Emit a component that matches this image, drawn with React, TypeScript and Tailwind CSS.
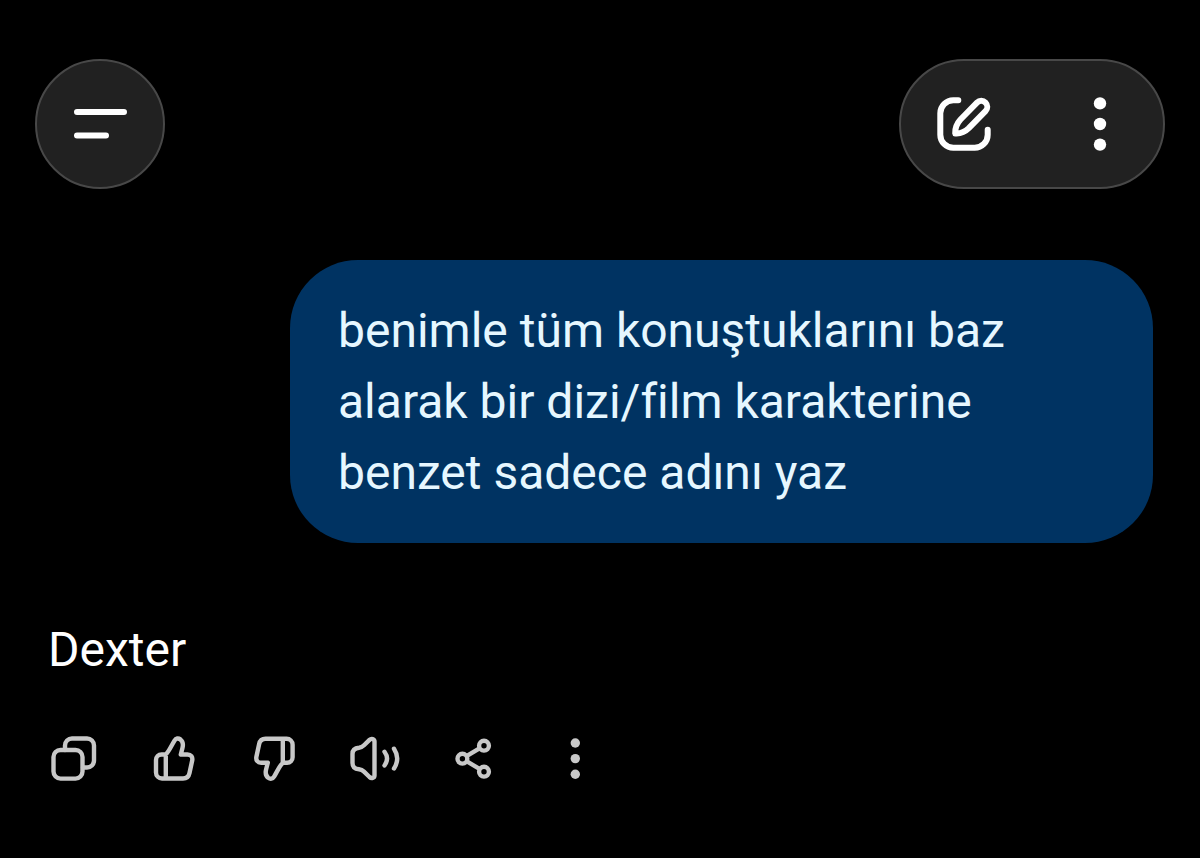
import type { ReactNode } from 'react'

const messages = {
  user: 'benimle tüm konuştuklarını baz alarak bir dizi/film karakterine benzet sadece adını yaz',
  assistant: 'Dexter'
}

const thumbPath =
  'M13.5 21.5H17.6C20.5 19.5 23.2 13 26.5 7.6C28 5.2 30.3 4.9 32.4 6.4C35 8.4 35.3 11.8 34.4 15.2L32.8 21.5H39.5C43 21.5 44.9 24 44.2 27.5L41.5 40C40.8 43.5 38.5 45.5 35 45.5H14A6 6 0 0 1 8 39.5V27A5.5 5.5 0 0 1 13.5 21.5ZM17.8 21.5V45.5'

function HeaderIcon({ children }: { children: ReactNode }) {
  return (
    <svg
      viewBox="0 0 54 54"
      className="size-[54px]"
      fill="none"
      stroke="currentColor"
      strokeWidth="6"
      strokeLinecap="round"
      strokeLinejoin="round"
      aria-hidden="true"
    >
      {children}
    </svg>
  )
}

function ActionButton({ label, children }: { label: string; children: ReactNode }) {
  return (
    <button type="button" aria-label={label} className="shrink-0">
      <svg
        viewBox="0 0 52 52"
        className="size-[52px]"
        fill="none"
        stroke="currentColor"
        strokeWidth="4.4"
        strokeLinecap="round"
        strokeLinejoin="round"
        aria-hidden="true"
      >
        {children}
      </svg>
    </button>
  )
}

function Header() {
  return (
    <header className="flex items-center justify-between px-[35px] text-white">
      <button
        type="button"
        aria-label="Menü"
        className="flex size-[130px] items-center justify-center rounded-full border-2 border-[#484848] bg-[#212121]"
      >
        <HeaderIcon>
          <path d="M4 15H51M4 38.6H33" />
        </HeaderIcon>
      </button>

      <div className="flex h-[130px] w-[266px] items-center justify-between rounded-full border-2 border-[#484848] bg-[#212121] px-9">
        <button type="button" aria-label="Yeni sohbet">
          <HeaderIcon>
            <path d="M21.3 3.3H16.3A13 13 0 0 0 3.3 16.3V37.7A13 13 0 0 0 16.3 50.7H37.7A13 13 0 0 0 50.7 37.7V32.7" />
            <path d="M18.2 36.4C18 31.5 19.4 27 23.5 22.5L40 5.6A6 6 0 0 1 48.5 14.1L31.8 31.2C27.5 35.4 23 36.8 18.2 36.4Z" />
          </HeaderIcon>
        </button>
        <button type="button" aria-label="Diğer seçenekler">
          <HeaderIcon>
            <g fill="currentColor" stroke="none">
              <circle cx="27" cy="6.4" r="6.2" />
              <circle cx="27" cy="27" r="6.2" />
              <circle cx="27" cy="47.6" r="6.2" />
            </g>
          </HeaderIcon>
        </button>
      </div>
    </header>
  )
}

function MessageActions() {
  return (
    <div className="mt-12 flex gap-12 text-[#c8c8c8]">
      <ActionButton label="Kopyala">
        <rect x="5.5" y="17" width="29" height="28.6" rx="7" />
        <path d="M17 17V12.5A7 7 0 0 1 24 5.5H39A7 7 0 0 1 46 12.5V27.5A7 7 0 0 1 39 34.5H35" />
      </ActionButton>
      <ActionButton label="Beğen">
        <path d={thumbPath} />
      </ActionButton>
      <ActionButton label="Beğenme">
        <path d={thumbPath} transform="rotate(180 26.3 25.6)" />
      </ActionButton>
      <ActionButton label="Sesli oku">
        <path d="M26.5 8.5V42.5C26.5 45 23.5 45.8 21.5 44L16 38.7C14.5 37.2 13 36.5 11 36.3C7 36 4.5 34 4.5 30V21C4.5 17 7 15 11 14.7C13 14.5 14.5 13.8 16 12.3L21.5 6.9C23.5 5 26.5 6 26.5 8.5Z" />
        <path d="M36.5 18.7Q41.6 25.6 36.5 32.5M46 15.7Q52.4 25.6 46 35.5" />
      </ActionButton>
      <ActionButton label="Paylaş">
        <circle cx="14.4" cy="25.7" r="4.9" />
        <circle cx="36" cy="12.7" r="4.9" />
        <circle cx="36" cy="38.7" r="4.9" />
        <path strokeLinecap="butt" d="M18.5 23.2L31.9 15.2M18.5 28.2L31.9 36.2" />
      </ActionButton>
      <ActionButton label="Diğer">
        <g fill="currentColor" stroke="none">
          <circle cx="27.3" cy="10" r="4.7" />
          <circle cx="27.3" cy="25.6" r="4.7" />
          <circle cx="27.3" cy="41.2" r="4.7" />
        </g>
      </ActionButton>
    </div>
  )
}

export default function App() {
  return (
    <div className="min-h-screen bg-black pt-[59px] pb-12 font-['Roboto',sans-serif] text-[48px] leading-[71px] [font-variant-ligatures:none]">
      <Header />
      <main className="mt-[71px] pr-[47px] pl-12">
        <div className="flex justify-end">
          <p className="max-w-[863px] rounded-[68px] bg-[#003362] px-12 py-[35px] text-[#e6f7ff]">
            {messages.user}
          </p>
        </div>
        <p className="mt-[71px] text-white">{messages.assistant}</p>
        <MessageActions />
      </main>
    </div>
  )
}
